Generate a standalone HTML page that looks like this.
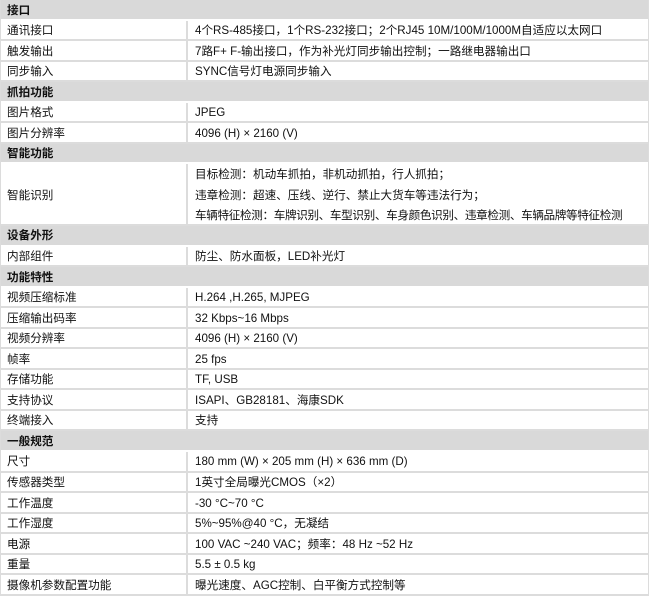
<!DOCTYPE html>
<html><head><meta charset="utf-8"><style>
html,body{margin:0;padding:0;background:#fff;}
body{width:649px;height:597px;overflow:hidden;font-family:"Liberation Sans","Noto Sans CJK SC",sans-serif;font-size:11.6px;color:#111;}
.t{position:absolute;left:0;top:0;width:647px;border-left:1px solid #dcdcdc;border-right:1px solid #dcdcdc;}
.r{position:relative;height:20.55px;border-bottom:2px solid #dcdcdc;box-sizing:border-box;}
.h{background:#d9d9d9;font-weight:bold;border-bottom:2px solid #fff;}
.h span,.a,.b{position:absolute;top:1.5px;height:18.5px;line-height:18.5px;white-space:nowrap;}
.h span,.a{left:6px;}
.b{left:194px;}
.r:not(.h)::after{content:"";position:absolute;left:185px;top:0;bottom:0;width:2px;background:#dcdcdc;}
.s{height:61.6px;}
.s .a{top:22.5px;}
.s .b{line-height:20.5px;height:auto;top:1px;}
.n{letter-spacing:-0.35px;}
</style></head><body>
<div class="t">
<div class="r h"><span>接口</span></div>
<div class="r"><div class="a">通讯接口</div><div class="b">4个RS-485接口，1个RS-232接口；2个RJ45 10M/100M/1000M自适应以太网口</div></div>
<div class="r"><div class="a">触发输出</div><div class="b">7路F+ F-输出接口，作为补光灯同步输出控制；一路继电器输出口</div></div>
<div class="r"><div class="a">同步输入</div><div class="b">SYNC信号灯电源同步输入</div></div>
<div class="r h"><span>抓拍功能</span></div>
<div class="r"><div class="a">图片格式</div><div class="b">JPEG</div></div>
<div class="r"><div class="a">图片分辨率</div><div class="b">4096 (H) × 2160 (V)</div></div>
<div class="r h"><span>智能功能</span></div>
<div class="r s"><div class="a">智能识别</div><div class="b">目标检测：机动车抓拍，非机动抓拍，行人抓拍；<br>违章检测：超速、压线、逆行、禁止大货车等违法行为；<br><span class="n">车辆特征检测：车牌识别、车型识别、车身颜色识别、违章检测、车辆品牌等特征检测</span></div></div>
<div class="r h"><span>设备外形</span></div>
<div class="r"><div class="a">内部组件</div><div class="b">防尘、防水面板，LED补光灯</div></div>
<div class="r h"><span>功能特性</span></div>
<div class="r"><div class="a">视频压缩标准</div><div class="b">H.264 ,H.265, MJPEG</div></div>
<div class="r"><div class="a">压缩输出码率</div><div class="b">32 Kbps~16 Mbps</div></div>
<div class="r"><div class="a">视频分辨率</div><div class="b">4096 (H) × 2160 (V)</div></div>
<div class="r"><div class="a">帧率</div><div class="b">25 fps</div></div>
<div class="r"><div class="a">存储功能</div><div class="b">TF, USB</div></div>
<div class="r"><div class="a">支持协议</div><div class="b">ISAPI、GB28181、海康SDK</div></div>
<div class="r"><div class="a">终端接入</div><div class="b">支持</div></div>
<div class="r h"><span>一般规范</span></div>
<div class="r"><div class="a">尺寸</div><div class="b">180 mm (W) × 205 mm (H) × 636 mm (D)</div></div>
<div class="r"><div class="a">传感器类型</div><div class="b">1英寸全局曝光CMOS（×2）</div></div>
<div class="r"><div class="a">工作温度</div><div class="b">-30 °C~70 °C</div></div>
<div class="r"><div class="a">工作湿度</div><div class="b">5%~95%@40 °C，无凝结</div></div>
<div class="r"><div class="a">电源</div><div class="b">100 VAC ~240 VAC；频率：48 Hz ~52 Hz</div></div>
<div class="r"><div class="a">重量</div><div class="b">5.5 ± 0.5 kg</div></div>
<div class="r"><div class="a">摄像机参数配置功能</div><div class="b">曝光速度、AGC控制、白平衡方式控制等</div></div>
</div>
</body></html>
